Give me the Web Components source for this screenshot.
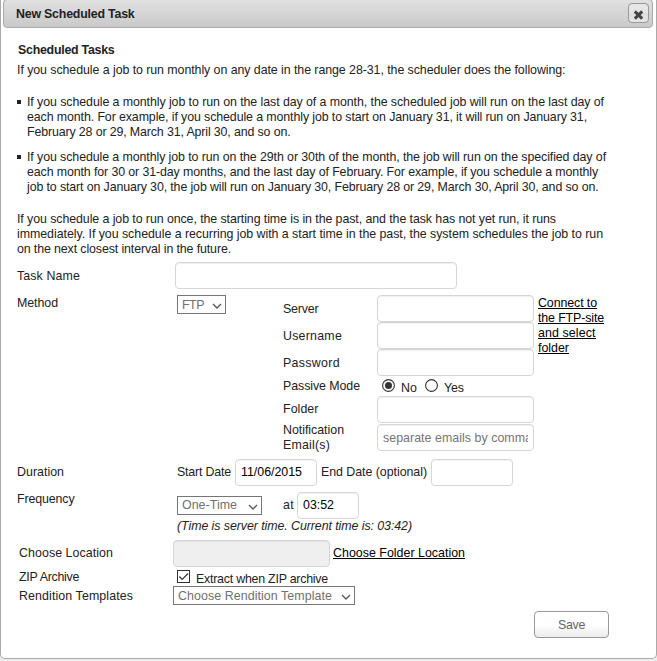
<!DOCTYPE html>
<html lang="en">
<head>
<meta charset="utf-8">
<title>New Scheduled Task</title>
<style>
body{margin:0;background:#ececec;font:12.4px/15px "Liberation Sans",Arial,sans-serif;color:#222;width:657px;height:661px;overflow:hidden}
</style>
</head>
<body>
<task-dialog></task-dialog>
<script>
const define=(name,html,setup)=>customElements.define(name,class extends HTMLElement{
  connectedCallback(){
    if(this.shadowRoot)return;
    this.attachShadow({mode:'open'}).innerHTML=html;
    if(setup)setup(this,this.shadowRoot);
  }
});

/* One line of text, tracked so that it spans the width in its "w" attribute. */
define('fit-text','<style>:host{display:block;flex:none;height:15px;line-height:17px;white-space:pre}span{display:inline-block;height:15px;vertical-align:top}:host([u]) span{box-sizing:border-box;height:14px;border-bottom:1px solid #000}</style><span><slot></slot></span>',(el,root)=>{
  const w=+el.getAttribute('w');
  if(!w)return;
  const s=root.querySelector('span');
  const n=el.textContent.length;
  s.style.letterSpacing=(w-s.getBoundingClientRect().width)/n+'px';
  el.style.width=w+'px';
});

define('text-box','<style>:host{display:block;flex:none;box-sizing:border-box;width:157px;height:27px;border:1px solid #d6d6d6;border-radius:4px;background:#fff;box-shadow:inset 0 1px 1px rgba(0,0,0,.06);padding:4px 5px 0;color:#000}:host([disabled]){background:#efefef}:host([hint]){color:#757575;padding-top:5px}div{overflow:hidden;height:16px}</style><div><slot></slot></div>');

define('drop-down','<style>:host{display:flex;flex:none;box-sizing:border-box;height:19px;border:1px solid #767676;background:#fff;padding:1px 3px 1px 4px;justify-content:space-between;color:#707070}svg{display:block;margin-top:4px}</style><slot></slot><svg width="10" height="10" viewBox="0 0 10 10"><path d="M1 3 5 7 9 3" fill="none" stroke="#555" stroke-width="1.25"/></svg>');

define('radio-dot','<style>:host{display:block;flex:none;width:13px;height:13px}svg{display:block}circle:last-child{display:none}:host([checked]) circle:last-child{display:block}</style><svg width="13" height="13"><circle cx="6.5" cy="6.5" r="5.9" fill="#fff" stroke="#333" stroke-width="1.1"/><circle cx="6.5" cy="6.5" r="3.5" fill="#333"/></svg>');

define('check-box','<style>:host{display:block;flex:none;width:13px;height:13px}svg{display:block}</style><svg width="13" height="13"><rect x=".5" y=".5" width="12" height="12" fill="#fff" stroke="#333"/><path d="M2.4 6.5 5.2 9.3 11 3.5" fill="none" stroke="#333" stroke-width="1.2"/></svg>');

define('text-link','<style>:host{display:block;flex:none;color:#000}</style><slot></slot>');

define('title-bar',`<style>
:host{display:flex;box-sizing:border-box;height:29px;margin:-1px 3px 0 2px;border:1px solid #aaa;border-radius:4px;background:linear-gradient(#e1e1e1,#c9c9c9);padding:6px 3px 0 12px;justify-content:space-between;font-weight:bold}
button{all:unset;display:block;box-sizing:border-box;width:21px;height:20px;margin-top:-3px;border:1px solid #999;border-radius:4px;background:linear-gradient(#e6e6e6 50%,#dcdcdc 50%,#e6e6e6)}
svg{display:block;margin:4px 0 0 4px}
</style><slot></slot><button aria-label="Close"><svg width="11" height="10" viewBox="0 0 11 10"><path d="M1.8 1.4 9.2 8.6M9.2 1.4 1.8 8.6" stroke="#444" stroke-width="3"/></svg></button>`);

define('bullet-item','<style>:host{display:grid;grid-template-columns:10px 1fr}i{width:4px;height:4px;background:#222;margin:6px 0 0 0}</style><i></i><div><slot></slot></div>');

/* A row whose label fills a fixed first column. */
define('form-row','<style>:host{display:grid;grid-template-columns:var(--label,160px) auto;align-items:start;justify-content:start}slot[name=label]{display:block}.c{display:flex;align-items:flex-start}</style><slot name="label"></slot><div class="c"><slot></slot></div>');

define('push-button','<style>:host{display:flex;box-sizing:border-box;width:75px;height:27px;border:1px solid #999;border-radius:4px;background:linear-gradient(#fff 50%,#ececec);justify-content:center;padding-top:5px;color:#666}</style><slot></slot>');

define('task-dialog',`<style>
:host{display:block;box-sizing:border-box;width:657px;height:660px;border:1px solid #aaa;border-top:0;border-radius:0 0 5px 5px;background:#fff}
main{padding:14px 0 0 16px}
h1{font:inherit;font-weight:bold;margin:0 0 5px 1px}
.gap{margin-bottom:17px}
.list{display:grid;gap:10px;margin-bottom:17px}
.ftp{display:grid;grid-template-columns:94px 157px auto;margin-left:57px;align-items:start}
.ftp text-link{grid-column:3;grid-row:1/span 6;margin-left:4px}
.row{display:flex;align-items:flex-start}
</style>
<title-bar><fit-text w="118.5">New Scheduled Task</fit-text></title-bar>
<main>
<h1><fit-text w="96.5">Scheduled Tasks</fit-text></h1>
<fit-text class="gap" w="548.5">If you schedule a job to run monthly on any date in the range 28-31, the scheduler does the following:</fit-text>
<div class="list">
<bullet-item><fit-text w="577">If you schedule a monthly job to run on the last day of a month, the scheduled job will run on the last day of</fit-text><fit-text w="560">each month. For example, if you schedule a monthly job to start on January 31, it will run on January 31,</fit-text><fit-text w="263.5">February 28 or 29, March 31, April 30, and so on.</fit-text></bullet-item>
<bullet-item><fit-text w="579">If you schedule a monthly job to run on the 29th or 30th of the month, the job will run on the specified day of</fit-text><fit-text w="571">each month for 30 or 31-day months, and the last day of February. For example, if you schedule a monthly</fit-text><fit-text w="571.5">job to start on January 30, the job will run on January 30, February 28 or 29, March 30, April 30, and so on.</fit-text></bullet-item>
</div>
<fit-text w="539">If you schedule a job to run once, the starting time is in the past, and the task has not yet run, it runs</fit-text>
<fit-text w="586">immediately. If you schedule a recurring job with a start time in the past, the system schedules the job to run</fit-text>
<fit-text w="214">on the next closest interval in the future.</fit-text>

<form-row style="--label:158px;margin-top:6px"><fit-text slot="label" w="63" style="margin-top:6px">Task Name</fit-text><text-box style="width:282px"></text-box></form-row>

<form-row style="margin-top:6px"><fit-text slot="label" w="41">Method</fit-text>
<drop-down style="width:49px"><fit-text w="22">FTP</fit-text></drop-down>
<div class="ftp">
<fit-text w="35.5" style="margin-top:6px">Server</fit-text><text-box></text-box>
<fit-text w="59" style="margin-top:6px">Username</fit-text><text-box></text-box>
<fit-text w="57" style="margin-top:6px">Password</fit-text><text-box></text-box>
<fit-text w="77" style="margin-top:2px">Passive Mode</fit-text>
<div class="row" style="height:20px;padding:3px 0 0 5px;box-sizing:border-box"><radio-dot checked></radio-dot><fit-text w="16" style="margin:1px 8px 0 6px">No</fit-text><radio-dot></radio-dot><fit-text w="20" style="margin:1px 0 0 6px">Yes</fit-text></div>
<fit-text w="35.5" style="margin-top:5px">Folder</fit-text><text-box></text-box>
<div style="margin:-1px 0 -3px"><fit-text w="61">Notification</fit-text><fit-text w="47">Email(s)</fit-text></div><text-box hint style="margin-top:1px"><fit-text w="149">separate emails by comma</fit-text></text-box>
<text-link><fit-text u w="59">Connect to</fit-text><fit-text u w="66">the FTP-site</fit-text><fit-text u w="57.5">and select</fit-text><fit-text u w="31">folder</fit-text></text-link>
</div></form-row>

<form-row style="margin-top:8px"><fit-text slot="label" w="47" style="margin-top:5px">Duration</fit-text>
<fit-text w="54" style="margin:5px 4px 0 0">Start Date</fit-text><text-box style="width:82px"><fit-text w="61">11/06/2015</fit-text></text-box>
<fit-text w="106" style="margin:5px 4px 0">End Date (optional)</fit-text><text-box style="width:82px"></text-box></form-row>

<form-row style="margin-top:5px"><fit-text slot="label" w="57.5">Frequency</fit-text>
<div><div class="row" style="padding-top:1px;height:26px">
<drop-down style="width:85px;margin-top:4px"><fit-text w="55" style="margin-top:-1px">One-Time</fit-text></drop-down>
<fit-text w="11" style="margin:5px 3px 0 21px">at</fit-text><text-box style="width:62px"><fit-text w="31">03:52</fit-text></text-box></div>
<fit-text w="235" style="font-style:italic">(Time is server time. Current time is: 03:42)</fit-text></div></form-row>

<form-row style="--label:154px;margin:7px 0 0 2px"><fit-text slot="label" w="94" style="margin-top:5px">Choose Location</fit-text>
<text-box disabled></text-box><text-link style="margin:5px 0 0 3px"><fit-text u w="132">Choose Folder Location</fit-text></text-link></form-row>
<form-row style="--label:158px;margin:2px 0 0 2px"><fit-text slot="label" w="60">ZIP Archive</fit-text>
<check-box style="margin-top:1px"></check-box><fit-text w="132" style="margin:2px 0 0 6px">Extract when ZIP archive</fit-text></form-row>
<form-row style="--label:154px;margin:0 0 0 2px"><fit-text slot="label" w="114" style="margin-top:2px">Rendition Templates</fit-text>
<drop-down style="width:182px"><fit-text w="154">Choose Rendition Template</fit-text></drop-down></form-row>
<push-button style="margin:6px 0 0 517px"><fit-text w="27">Save</fit-text></push-button>
</main>`);
</script>
</body>
</html>
